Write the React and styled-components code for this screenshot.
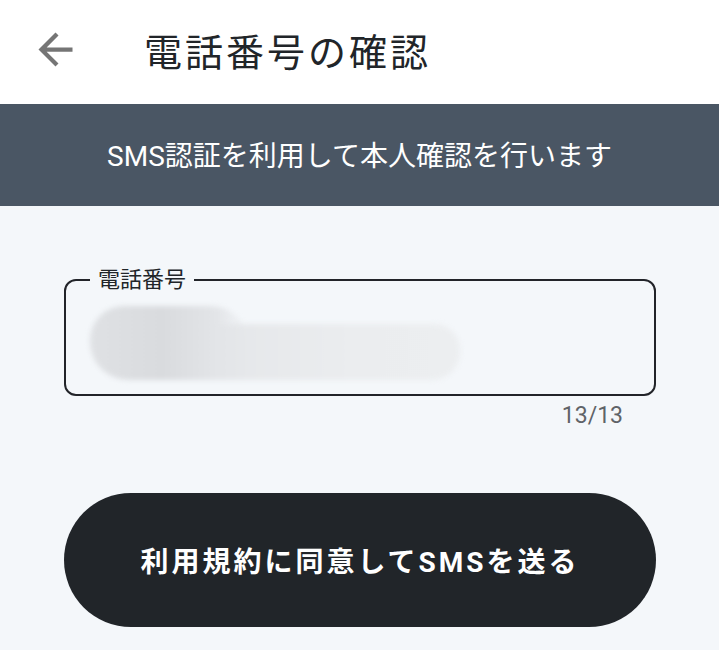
import React from 'react';
import styled, { createGlobalStyle } from 'styled-components';

const GlobalStyle = createGlobalStyle`
  html, body {
    margin: 0;
    padding: 0;
    background: #f4f7fa;
    font-family: Roboto, "Noto Sans CJK JP", sans-serif;
  }
`;

const Page = styled.div`
  width: 719px;
  min-height: 650px;
  background: #f4f7fa;
`;

const Header = styled.header`
  height: 104px;
  background: #ffffff;
  display: flex;
  align-items: center;
  padding: 0 0 6px 30px;
  box-sizing: border-box;
`;

const BackButton = styled.button`
  width: 51px;
  height: 51px;
  padding: 0;
  border: none;
  background: transparent;
  display: flex;
  margin-right: 63px;

  svg {
    width: 51px;
    height: 51px;
    fill: #757575;
  }
`;

const Title = styled.h1`
  margin: 0;
  font-size: 38px;
  font-weight: 400;
  letter-spacing: 3px;
  color: #212529;
`;

const Banner = styled.div`
  height: 102px;
  background: #4a5664;
  color: #ffffff;
  display: flex;
  align-items: center;
  justify-content: center;
  font-size: 28px;
  padding-bottom: 2px;
  box-sizing: border-box;
`;

const Body = styled.main`
  padding: 62px 63px 0 64px;
  display: flex;
  flex-direction: column;
`;

const Field = styled.fieldset`
  margin: 0;
  height: 128px;
  box-sizing: border-box;
  border: 2px solid #222429;
  border-radius: 12px;
  padding: 14px 24px 0;
`;

const Legend = styled.legend`
  font-size: 22px;
  color: #212529;
  padding: 0 8px;
  line-height: 24px;
`;

const Redacted = styled.div`
  position: relative;
  width: 370px;
  height: 76px;
  filter: blur(2.5px);

  &::before {
    content: '';
    position: absolute;
    z-index: 1;
    left: 0;
    top: 0;
    width: 160px;
    height: 74px;
    border-radius: 34px 40px 10px 38px;
    background: linear-gradient(90deg, #dfe1e4 0%, #d9dbde 45%, #e3e5e8 80%, rgba(230, 232, 235, 0) 100%);
  }

  &::after {
    content: '';
    position: absolute;
    left: 110px;
    top: 18px;
    width: 260px;
    height: 56px;
    border-radius: 0 26px 28px 0;
    background: linear-gradient(90deg, #e4e6e9 0%, #ebedef 60%, #eceef0 100%);
  }
`;

const Counter = styled.div`
  align-self: flex-end;
  margin: 6px 33px 0 0;
  font-size: 23px;
  color: #5f6368;
`;

const SubmitButton = styled.button`
  margin-top: 64px;
  height: 134px;
  border: none;
  border-radius: 67px;
  background: #212529;
  color: #ffffff;
  font-family: Roboto, "Noto Sans CJK JP", sans-serif;
  font-size: 28px;
  font-weight: 700;
  letter-spacing: 3px;
`;

export default function App() {
  return (
    <Page>
      <GlobalStyle />
      <Header>
        <BackButton aria-label="戻る">
          <svg viewBox="0 0 24 24">
            <path d="M20 11H7.83l5.59-5.59L12 4l-8 8 8 8 1.41-1.41L7.83 13H20v-2z" />
          </svg>
        </BackButton>
        <Title>電話番号の確認</Title>
      </Header>
      <Banner>SMS認証を利用して本人確認を行います</Banner>
      <Body>
        <Field>
          <Legend>電話番号</Legend>
          <Redacted />
        </Field>
        <Counter>13/13</Counter>
        <SubmitButton>利用規約に同意してSMSを送る</SubmitButton>
      </Body>
    </Page>
  );
}
